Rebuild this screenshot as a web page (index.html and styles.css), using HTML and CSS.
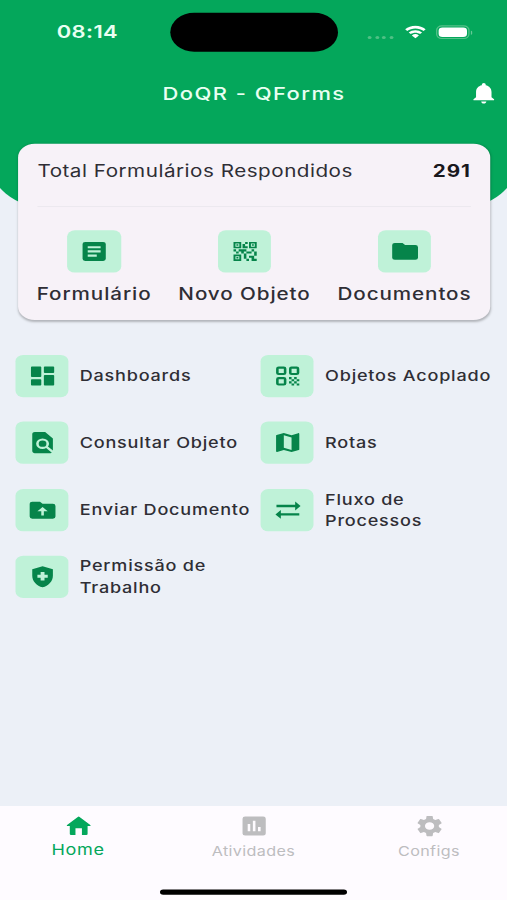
FILE: index.html
```
<!DOCTYPE html>
<html lang="pt">
<head>
    <meta charset="UTF-8">
    <meta name="viewport" content="width=device-width, initial-scale=1.0">
    <title>DoQR - QForms</title>
    <link rel="stylesheet" href="styles.css">
</head>
<body>
    <div class="app">
        <header class="topo">
            <div class="status">
                <span class="hora">08:14</span>
                <div class="ilha"></div>
                <div class="sinais">
                    <div class="pontos"><i></i><i></i><i></i><i></i></div>
                    <svg class="wifi" viewBox="0 0 17 12"><path d="M8.5 2.6c2.3 0 4.4.9 6 2.3l1.5-1.5A10.900 10.900 0 0 0 8.500.300C5.600.300 3 1.500 1 3.400l1.500 1.500c1.600-1.400 3.700-2.300 6-2.300zM8.500 6.400c1.300 0 2.500.500 3.400 1.300l1.500-1.500A7.100 7.100 0 0 0 8.500 4.200c-1.900 0-3.600.700-4.900 2l1.500 1.500c.900-.800 2.100-1.300 3.400-1.300zM11.100 8.900a3.700 3.700 0 0 0-5.200 0l2.600 2.600z"/></svg>
                    <div class="bateria"><div class="carga"></div></div>
                </div>
            </div>
            <div class="barra">
                <h1>DoQR - QForms</h1>
                <svg class="icone sino" viewBox="0 0 24 24"><path d="M12 22c1.100 0 2-.900 2-2h-4c0 1.100.900 2 2 2zm6-6v-5c0-3.070-1.630-5.640-4.500-6.320V4a1.500 1.500 0 0 0-3 0v.680C7.640 5.360 6 7.920 6 11v5l-2 2v1h16v-1l-2-2z"/></svg>
            </div>
        </header>

        <main>
            <section class="cartao">
                <div class="total">
                    <span>Total Formulários Respondidos</span>
                    <strong>291</strong>
                </div>
                <div class="atalhos">
                    <a class="atalho">
                        <span class="quadro"><svg class="icone" viewBox="0 0 24 24"><path d="M19 3H5a2 2 0 0 0-2 2v14a2 2 0 0 0 2 2h14a2 2 0 0 0 2-2V5a2 2 0 0 0-2-2zm-5 14H7v-2h7v2zm3-4H7v-2h10v2zm0-4H7V7h10v2z"/></svg></span>
                        <span class="nome">Formulário</span>
                    </a>
                    <a class="atalho">
                        <span class="quadro"><svg class="icone" viewBox="0 0 24 24"><path d="M15 21h-2v-2h2v2zm-2-7h-2v5h2v-5zm8-2h-2v4h2v-4zm-2-2h-2v2h2v-2zM7 12H5v2h2v-2zm-2-2H3v2h2v-2zm7-5h2V3h-2v2zm-7.500-.500v3h3v-3h-3zM9 9H3V3h6v6zm-4.500 7.500v3h3v-3h-3zM9 21H3v-6h6v6zm7.500-16.500v3h3v-3h-3zM21 9h-6V3h6v6zm-2 10v-3h-4v2h2v3h4v-2h-2zm-2-7h-4v2h4v-2zm-4-2H7v2h2v2h2v-2h2v-2zm1-1V7h-2V5h-2v4h4zM6.750 5.250h-1.500v1.500h1.500v-1.500zm0 12h-1.500v1.500h1.500v-1.500zm12-12h-1.500v1.500h1.500v-1.500z"/></svg></span>
                        <span class="nome">Novo Objeto</span>
                    </a>
                    <a class="atalho">
                        <span class="quadro"><svg class="icone" viewBox="0 0 24 24"><path d="M10 4H4a2 2 0 0 0-2 2v12a2 2 0 0 0 2 2h16a2 2 0 0 0 2-2V8a2 2 0 0 0-2-2h-8l-2-2z"/></svg></span>
                        <span class="nome">Documentos</span>
                    </a>
                </div>
            </section>

            <section class="menu">
                <a class="item">
                    <span class="quadro"><svg class="icone" viewBox="0 0 24 24"><path d="M3.700 13h6.600c.400 0 .700-.300.700-.700V3.700c0-.400-.300-.700-.700-.700H3.700c-.400 0-.700.300-.700.700v8.600c0 .400.300.700.700.700zm0 8h6.600c.400 0 .700-.300.700-.700v-4.600c0-.400-.300-.700-.700-.700H3.700c-.400 0-.700.300-.700.700v4.600c0 .400.300.700.700.700zm10 0h6.600c.400 0 .700-.300.700-.700v-8.600c0-.400-.300-.700-.700-.700h-6.600c-.400 0-.700.300-.700.700v8.600c0 .400.300.700.700.700zM13 3.700v4.600c0 .400.300.700.700.700h6.600c.400 0 .700-.300.700-.700V3.700c0-.400-.300-.700-.700-.700h-6.600c-.400 0-.700.300-.700.700z"/></svg></span>
                    <span class="rotulo">Dashboards</span>
                </a>
                <a class="item">
                    <span class="quadro"><svg class="icone" viewBox="0 0 24 24"><g class="traco"><rect x="4" y="4" width="6" height="6" rx="1"/><rect x="14" y="4" width="6" height="6" rx="1"/><rect x="4" y="14" width="6" height="6" rx="1"/></g><path d="M13 13h2v2h-2zM17 13h2v2h-2zM15 15h2v2h-2zM19 15h2v2h-2zM13 17h2v2h-2zM17 17h2v2h-2zM15 19h2v2h-2zM19 19h2v2h-2z"/></svg></span>
                    <span class="rotulo">Objetos Acoplado</span>
                </a>
                <a class="item">
                    <span class="quadro"><svg class="icone" viewBox="0 0 24 24"><path d="M20 19.590V8l-6-6H6c-1.100 0-2 .900-2 2v16c0 1.100.890 2 1.990 2H18c.450 0 .850-.150 1.190-.400l-4.430-4.430c-.800.520-1.740.830-2.760.830a5 5 0 1 1 5-5c0 1.020-.310 1.960-.830 2.750L20 19.590zM9 13a3 3 0 1 0 6 0 3 3 0 0 0-6 0z"/></svg></span>
                    <span class="rotulo">Consultar Objeto</span>
                </a>
                <a class="item">
                    <span class="quadro"><svg class="icone" viewBox="0 0 24 24"><path d="M20.200 3.030L15 5.100 9 3 3.360 4.900c-.210.070-.360.250-.360.480v14.300c0 .900.300 1.300.800 1.290L9 18.900l6 2.100 5.640-1.900c.210-.070.360-.250.360-.480V4.200c0-.900-.300-1.300-.800-1.170zM15 19l-6-2.110V5l6 2.110V19z"/></svg></span>
                    <span class="rotulo">Rotas</span>
                </a>
                <a class="item">
                    <span class="quadro"><svg class="icone" viewBox="0 0 24 24"><path d="M20 6h-8l-2-2H4a2 2 0 0 0-2 2v12a2 2 0 0 0 2 2h16a2 2 0 0 0 2-2V8a2 2 0 0 0-2-2zm-7 7v4h-2v-4H8l4-4 4 4h-3z"/></svg></span>
                    <span class="rotulo">Enviar Documento</span>
                </a>
                <a class="item">
                    <span class="quadro"><svg class="icone" viewBox="0 0 24 24"><path d="M3.300 6.900H17.800V3.800l4.200 4.200-4.200 4.200V9.100H3.300zM21 14.900H6.700V11.800l-4.200 4.200 4.200 4.200v-3.100H21z"/></svg></span>
                    <span class="rotulo">Fluxo de Processos</span>
                </a>
                <a class="item">
                    <span class="quadro"><svg class="icone" viewBox="0 0 24 24"><path d="M12 2L4 5v6.100c0 5.050 3.410 9.760 8 10.900 4.590-1.140 8-5.850 8-10.900V5l-8-3zm4 11h-2.500v2.500h-3V13H8v-3h2.500V7.500h3V10H16v3z"/></svg></span>
                    <span class="rotulo">Permissão de Trabalho</span>
                </a>
            </section>
        </main>

        <footer class="rodape">
            <nav class="abas">
                <a class="aba ativa">
                    <svg class="icone" viewBox="0 0 24 24"><path d="M11.300 3.400a1 1 0 0 1 1.400 0l8.300 7.600c.400.400.200 1-.400 1h-1.700v7.500a1 1 0 0 1-1 1h-3.400V14h-5v6.500H6.100a1 1 0 0 1-1-1V12H3.400c-.600 0-.800-.600-.400-1z"/></svg>
                    <span>Home</span>
                </a>
                <a class="aba">
                    <svg class="icone" viewBox="0 0 24 24"><path d="M19 3H5a2 2 0 0 0-2 2v14a2 2 0 0 0 2 2h14a2 2 0 0 0 2-2V5a2 2 0 0 0-2-2zM9 17H7v-7h2v7zm4 0h-2V7h2v10zm4 0h-2v-4h2v4z"/></svg>
                    <span>Atividades</span>
                </a>
                <a class="aba">
                    <svg class="icone" viewBox="0 0 24 24"><path d="M19.140 12.940c.040-.300.060-.610.060-.940 0-.320-.020-.640-.070-.940l2.030-1.580a.490.490 0 0 0 .120-.610l-1.920-3.320a.488.488 0 0 0-.590-.220l-2.390.960c-.500-.380-1.030-.700-1.620-.940l-.360-2.540a.484.484 0 0 0-.480-.410h-3.840c-.240 0-.430.170-.470.410l-.360 2.540c-.590.240-1.130.570-1.620.940l-2.390-.960c-.220-.080-.470 0-.590.220L2.740 8.870c-.120.210-.080.470.120.610l2.030 1.580c-.050.300-.090.630-.090.940s.020.640.070.940l-2.030 1.580a.490.490 0 0 0-.120.610l1.920 3.320c.120.220.370.290.590.220l2.390-.960c.500.380 1.030.700 1.620.940l.360 2.540c.050.240.240.410.480.410h3.840c.240 0 .440-.170.470-.410l.360-2.540c.590-.240 1.130-.560 1.620-.940l2.390.960c.220.080.470 0 .590-.220l1.920-3.320c.120-.220.070-.470-.120-.610l-2.010-1.580zM12 15.600A3.610 3.610 0 0 1 8.400 12c0-1.980 1.620-3.600 3.600-3.600s3.600 1.620 3.600 3.600-1.620 3.600-3.600 3.600z"/></svg>
                    <span>Configs</span>
                </a>
            </nav>
            <div class="indicador"></div>
        </footer>
    </div>
</body>
</html>
```
FILE: styles.css
```
* { box-sizing: border-box; }
html { height: 900px; background: #ecf0f7; }
body { margin: 0; height: 900px; overflow: hidden; font-family: Inter, "Liberation Sans", sans-serif; }

/* tela de 393x852 esticada para ocupar a janela */
.app { width: 393px; height: 852px; display: flex; flex-direction: column; overflow: hidden; transform: scale(1.29008, 1.05634); transform-origin: 0 0; background: #ecf0f7; color: #2f2e35; }
.icone { width: 24px; height: 24px; display: block; fill: currentColor; }
.traco { fill: none; stroke: currentColor; stroke-width: 2; }

.topo { height: 198px; flex: none; margin: 0 -10px -62px; padding: 0 10px; background: #04a75b; color: #e9fff2; border-radius: 0 0 50px 50px; }
.status { display: flex; height: 61px; }
.hora { width: 132px; padding: 20px 0 0 44px; font-size: 17px; line-height: 21px; font-weight: 600; letter-spacing: 0.300px; }
.ilha { width: 130px; height: 37px; margin-top: 12px; border-radius: 19px; background: #000; }
.sinais { display: flex; flex: 1; padding: 23.500px 0 0 23px; }
.pontos { display: flex; gap: 2.700px; width: 28px; padding-top: 10px; }
.pontos i { width: 3px; height: 3px; border-radius: 50%; background: #50c085; }
.wifi { width: 18px; height: 13px; fill: #fff; }
.bateria { position: relative; width: 26px; height: 13.500px; margin-left: 7px; padding: 1.200px; border: 1px solid #55c189; border-radius: 4.500px; }
.bateria::after { content: ""; position: absolute; right: -3px; top: 4px; width: 1.500px; height: 4px; border-radius: 0 2px 2px 0; background: #65c996; }
.carga { height: 100%; border-radius: 3px; background: #fff; }
.barra { display: flex; align-items: center; height: 54px; padding: 0 5.800px 0 126px; }
.barra h1 { flex: 1; margin: 0; padding-top: 1.500px; font-size: 17px; font-weight: 500; letter-spacing: 1.120px; white-space: nowrap; }
.sino { color: #fff; }

main { flex: 1; }
.cartao { position: relative; height: 167px; margin: 0 13px 0 14px; padding: 0 15px; border-radius: 13px; background: #f7f2f8; box-shadow: 0 1px 2px rgba(0,0,0,0.25); }
.total { display: flex; justify-content: space-between; height: 60px; padding-top: 16px; border-bottom: 1px solid #ece9ef; font-size: 16px; line-height: 20px; letter-spacing: 0.390px; }
.total strong { color: #19181d; font-weight: 700; letter-spacing: 0.700px; }
.atalhos { display: flex; justify-content: space-between; padding-top: 22px; margin: 0 -0.500px; }
.atalho { display: flex; flex-direction: column; align-items: center; gap: 10px; }
.nome { font-size: 16px; line-height: 20px; font-weight: 500; letter-spacing: 0.700px; white-space: nowrap; }
.quadro { display: flex; align-items: center; justify-content: center; flex: none; width: 41.500px; height: 40px; border-radius: 6px; background: #bff2d8; color: #06844a; }

.menu { display: grid; grid-template-columns: 190.200px 1fr; grid-auto-rows: 40px; row-gap: 23.400px; margin-top: 33px; padding-left: 11.800px; }
.item { display: flex; align-items: center; gap: 8.500px; }
.rotulo { width: 136px; font-size: 14px; line-height: 20px; font-weight: 500; letter-spacing: 0.600px; }
.item:nth-child(n+6) .rotulo { width: 110px; }

.rodape { height: 89px; flex: none; background: #fefbff; }
.abas { display: flex; height: 79px; padding: 7px 0 0; margin: 0 -7.500px; }
.aba { flex: 1; display: flex; flex-direction: column; align-items: center; gap: 1.600px; color: #bdbdbf; font-size: 12.500px; line-height: 20px; letter-spacing: 0.300px; }
.ativa { color: #04a75b; font-size: 14px; gap: 0; letter-spacing: 0.500px; }
.indicador { width: 145px; height: 5px; margin: 0 auto; border-radius: 3px; background: #000; }
```
